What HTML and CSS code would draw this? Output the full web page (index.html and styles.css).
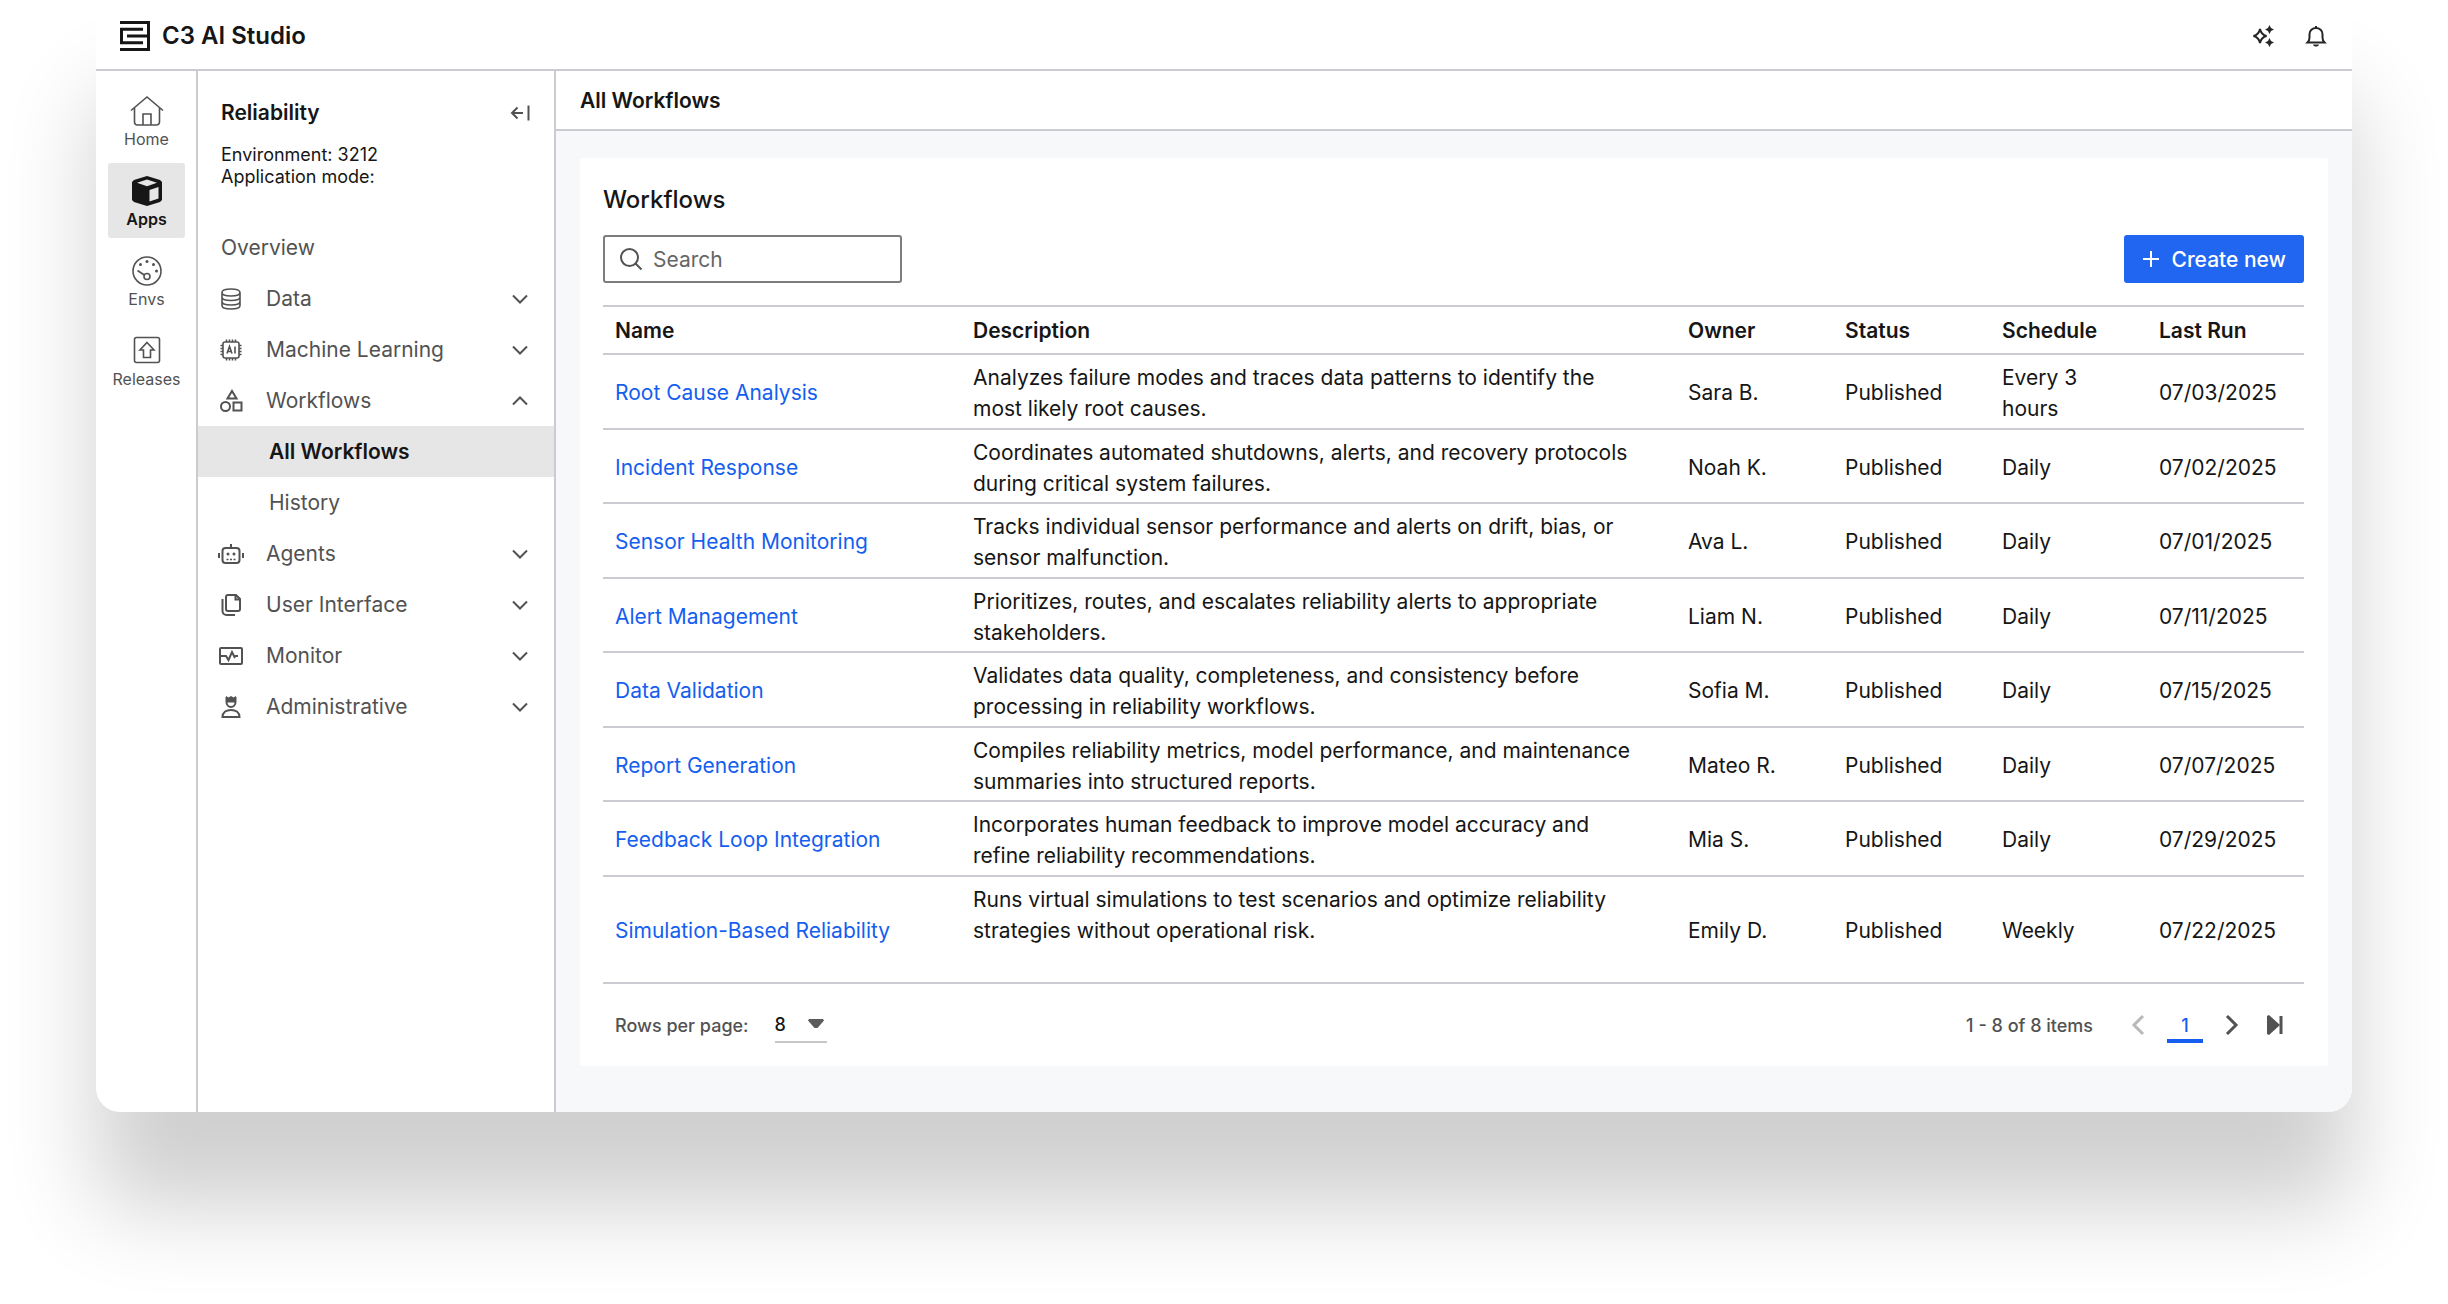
FILE: index.html
```html
<!DOCTYPE html>
<html lang="en">

<head>
	<meta charset="UTF-8" />
	<meta name="viewport" content="width=device-width, initial-scale=1.0" />
	<title>C3 AI Studio</title>
	<link rel="stylesheet" href="styles.css">
</head>

<body>
	<!-- shared icons -->
	<svg class="sprite" aria-hidden="true">
		<symbol id="chevron" viewBox="0 0 16 10">
			<path d="M1 1.5l7 7 7-7" />
		</symbol>
	</svg>

	<div class="window">
		<header class="header">
			<a href="#" class="brand">
				<svg class="logo" viewBox="0 0 30 30">
					<path d="M0 1.5h28.5v27H0M23 8.3H1.5v13.4H23M7 15h21.500" />
				</svg>
				C3 AI Studio
			</a>
			<div class="header-actions">
				<button class="icon-btn" aria-label="Assistant">
					<svg class="icon dark" width="22" height="22" viewBox="0 0 22 22">
						<path d="M8 4c.8 4 2.500 6 6.500 7-4 1-5.700 3-6.500 7-.8-4-2.500-6-6.500-7C5.500 10 7.200 8 8 4z" />
						<path class="fill" d="M17.500 0l1.500 3 3 1.500-3 1.500-1.500 3-1.500-3-3-1.500 3-1.500zM17.500 13l1.500 3 3 1.500-3 1.500-1.500 3-1.500-3-3-1.500 3-1.500z" />
					</svg>
				</button>
				<button class="icon-btn" aria-label="Notifications">
					<svg class="icon dark" width="20" height="22" viewBox="0 0 20 22">
						<path d="M1.500 17.500h17c-1.500-1.500-2-2.500-2-5V9a6.500 6 0 0 0-13 0v3.500c0 2.500-.5 3.500-2 5zM10 3V1" />
						<path class="solid" d="M7 19.500h6c-.5 2.800-5.500 2.800-6 0z" />
					</svg>
				</button>
			</div>
		</header>

		<div class="layout">
			<nav class="rail" aria-label="Primary">
				<a href="#" class="rail-item">
					<svg class="icon thin" width="34" height="30" viewBox="0 0 34 30">
						<path d="M1 14.500L17 1l16 13.500M4.500 12v14a3 3 0 0 0 3 3h19a3 3 0 0 0 3-3V12M13 29V18h8v11" />
					</svg>
					Home
				</a>
				<a href="#" class="rail-item active">
					<svg width="30" height="30" viewBox="0 0 30 30">
						<path fill="#161616" d="M15 0l13 4 2 2v18l-2 2-13 4-13-4-2-2V6l2-2z" />
						<path fill="#e6e6e6" d="M15 3.500l10 3.200-10 3.600L5 6.700zM17.500 14l9-3v11.500l-9 3z" />
					</svg>
					Apps
				</a>
				<a href="#" class="rail-item">
					<svg class="icon thin" width="30" height="30" viewBox="0 0 30 30">
						<circle cx="15" cy="15" r="14" />
						<circle cx="15" cy="20.500" r="3" />
						<path d="M5.500 14.500l6.800 4.500" />
						<g class="solid">
							<circle cx="15" cy="5.500" r="1.500" />
							<circle cx="8.500" cy="8.500" r="1.500" />
							<circle cx="21.500" cy="8.500" r="1.500" />
							<circle cx="24.500" cy="15" r="1.500" />
						</g>
					</svg>
					Envs
				</a>
				<a href="#" class="rail-item">
					<svg class="icon thin" width="28" height="28" viewBox="0 0 28 28">
						<rect x="1.500" y="1.500" width="25" height="25" rx="2" />
						<path d="M14 6.500l7 7.500h-3.500v7.500h-7V14H7z" />
					</svg>
					Releases
				</a>
			</nav>

			<aside class="sidebar">
				<div class="sidebar-head">
					<h2>Reliability</h2>
					<button class="icon-btn" aria-label="Collapse sidebar">
						<svg class="icon" width="20" height="18" viewBox="0 0 20 18">
							<path d="M18.500 1.500v15M13 9H2M7.500 3.500L2 9l5.500 5.500" />
						</svg>
					</button>
				</div>
				<p class="env">Environment: 3212<br>Application mode:</p>

				<nav class="menu" aria-label="Application">
					<a href="#" class="menu-item">Overview</a>
					<button class="menu-item">
						<svg class="icon thin" viewBox="0 0 26 24">
							<path d="M4 5.500v13C4 20.500 7 22 13 22s9-1.500 9-3.500v-13C22 3.500 19 2 13 2S4 3.500 4 5.500 7 9 13 9s9-1.500 9-3.500M4 10c0 2 3 3.500 9 3.500s9-1.500 9-3.500M4 14.500C4 16.500 7 18 13 18s9-1.500 9-3.500" />
						</svg>
						Data
						<svg class="chevron"><use href="#chevron" /></svg>
					</button>
					<button class="menu-item">
						<svg class="icon thin" viewBox="0 0 26 24">
							<rect x="5" y="4" width="16" height="16" rx="2" />
							<path d="M8.500 4V1.500M11.500 4V1.500M14.500 4V1.500M17.500 4V1.500M8.500 20v2.500M11.500 20v2.500M14.500 20v2.500M17.500 20v2.500M5 7.500H2.500M5 10.500H2.500M5 13.500H2.500M5 16.500H2.500M21 7.500h2.500M21 10.500h2.500M21 13.500h2.500M21 16.500h2.500" />
							<path d="M9 15.500l2.500-7 2.500 7M10 13.500h3M17 8.500v7" />
						</svg>
						Machine Learning
						<svg class="chevron"><use href="#chevron" /></svg>
					</button>
					<button class="menu-item" aria-expanded="true">
						<svg class="icon" viewBox="0 0 26 24">
							<path d="M14 2l4.500 7.500h-9z" />
							<circle cx="7.500" cy="17.500" r="4.500" />
							<rect x="15.500" y="13.500" width="8" height="8" />
						</svg>
						Workflows
						<svg class="chevron"><use href="#chevron" /></svg>
					</button>
					<a href="#" class="menu-item sub active">All Workflows</a>
					<a href="#" class="menu-item sub">History</a>
					<button class="menu-item">
						<svg class="icon" viewBox="0 0 26 24">
							<rect x="4.500" y="6" width="17" height="15" rx="3" />
							<path d="M13 6V2M1 11v5M25 11v5" />
							<path class="thin" d="M8.500 17.500h2M12 17.500h2M15.500 17.500h2" />
							<circle class="solid" cx="10" cy="12" r="1.500" />
							<circle class="solid" cx="16" cy="12" r="1.500" />
						</svg>
						Agents
						<svg class="chevron"><use href="#chevron" /></svg>
					</button>
					<button class="menu-item">
						<svg class="icon" viewBox="0 0 26 24">
							<path d="M10 2h8l4 4v10a2 2 0 0 1-2 2H10a2 2 0 0 1-2-2V4a2 2 0 0 1 2-2zM17.500 2v4.500H22M4.500 6v12a4 4 0 0 0 4 4H17" />
						</svg>
						User Interface
						<svg class="chevron"><use href="#chevron" /></svg>
					</button>
					<button class="menu-item">
						<svg class="icon" viewBox="0 0 26 24">
							<rect x="2" y="4" width="22" height="16" rx="1" />
							<path d="M2 12h6l2.500 4L14 8l2.500 5 1-1H20" />
						</svg>
						Monitor
						<svg class="chevron"><use href="#chevron" /></svg>
					</button>
					<button class="menu-item">
						<svg class="icon" viewBox="0 0 26 24">
							<path d="M8.500 2v5c0 3 2 5 4.500 5s4.500-2 4.500-5V2M8.500 6.500h9M4.500 22c0-4.500 3.500-7 8.500-7s8.500 2.500 8.500 7z" />
							<path class="solid" d="M8 1l2.500 1.500L13 1l2.500 1.500L18 1v5H8z" />
						</svg>
						Administrative
						<svg class="chevron"><use href="#chevron" /></svg>
					</button>
				</nav>
			</aside>

			<main class="main">
				<div class="page-bar">
					<h1>All Workflows</h1>
				</div>

				<section class="card">
					<h2>Workflows</h2>

					<div class="toolbar">
						<label class="search">
							<svg class="icon" width="24" height="24" viewBox="0 0 24 24">
								<circle cx="10.500" cy="10.500" r="8.500" />
								<path d="M16.500 16.500l6 6" />
							</svg>
							<input type="text" placeholder="Search" aria-label="Search">
						</label>
						<button class="create">
							<svg class="icon" width="18" height="18" viewBox="0 0 18 18">
								<path d="M9 1v16M1 9h16" />
							</svg>
							Create new
						</button>
					</div>

					<table>
						<thead>
							<tr>
								<th class="col-name">Name</th>
								<th>Description</th>
								<th class="col-small">Owner</th>
								<th class="col-small">Status</th>
								<th class="col-small">Schedule</th>
								<th class="col-small">Last Run</th>
							</tr>
						</thead>
						<tbody>
							<tr>
								<td><a href="#">Root Cause Analysis</a></td>
								<td class="desc">Analyzes failure modes and traces data patterns to identify the most likely root causes.</td>
								<td>Sara B.</td>
								<td>Published</td>
								<td>Every 3 hours</td>
								<td>07/03/2025</td>
							</tr>
							<tr>
								<td><a href="#">Incident Response</a></td>
								<td class="desc">Coordinates automated shutdowns, alerts, and recovery protocols during critical system failures.</td>
								<td>Noah K.</td>
								<td>Published</td>
								<td>Daily</td>
								<td>07/02/2025</td>
							</tr>
							<tr>
								<td><a href="#">Sensor Health Monitoring</a></td>
								<td class="desc">Tracks individual sensor performance and alerts on drift, bias, or sensor malfunction.</td>
								<td>Ava L.</td>
								<td>Published</td>
								<td>Daily</td>
								<td>07/01/2025</td>
							</tr>
							<tr>
								<td><a href="#">Alert Management</a></td>
								<td class="desc">Prioritizes, routes, and escalates reliability alerts to appropriate stakeholders.</td>
								<td>Liam N.</td>
								<td>Published</td>
								<td>Daily</td>
								<td>07/11/2025</td>
							</tr>
							<tr>
								<td><a href="#">Data Validation</a></td>
								<td class="desc">Validates data quality, completeness, and consistency before processing in reliability workflows.</td>
								<td>Sofia M.</td>
								<td>Published</td>
								<td>Daily</td>
								<td>07/15/2025</td>
							</tr>
							<tr>
								<td><a href="#">Report Generation</a></td>
								<td class="desc">Compiles reliability metrics, model performance, and maintenance summaries into structured reports.</td>
								<td>Mateo R.</td>
								<td>Published</td>
								<td>Daily</td>
								<td>07/07/2025</td>
							</tr>
							<tr>
								<td><a href="#">Feedback Loop Integration</a></td>
								<td class="desc">Incorporates human feedback to improve model accuracy and refine reliability recommendations.</td>
								<td>Mia S.</td>
								<td>Published</td>
								<td>Daily</td>
								<td>07/29/2025</td>
							</tr>
							<tr>
								<td><a href="#">Simulation-Based Reliability</a></td>
								<td class="desc">Runs virtual simulations to test scenarios and optimize reliability strategies without operational risk.</td>
								<td>Emily D.</td>
								<td>Published</td>
								<td>Weekly</td>
								<td>07/22/2025</td>
							</tr>
						</tbody>
					</table>

					<div class="pagination">
						<label for="rows">Rows per page:</label>
						<div class="select">
							<select id="rows">
								<option>8</option>
								<option>16</option>
							</select>
							<svg width="16" height="10" viewBox="0 0 16 10">
								<path fill="#5c5c5c" d="M1 0h14l1 1.500L9.500 9h-3L0 1.500z" />
							</svg>
						</div>
						<span class="count">1 - 8 of 8 items</span>
						<button class="pager" aria-label="Previous page" disabled>
							<svg class="icon bold" width="14" height="22" viewBox="0 0 14 22">
								<path d="M12 2l-9 9 9 9" />
							</svg>
						</button>
						<button class="pager current">1</button>
						<button class="pager" aria-label="Next page">
							<svg class="icon bold" width="14" height="22" viewBox="0 0 14 22">
								<path d="M2 2l9 9-9 9" />
							</svg>
						</button>
						<button class="pager" aria-label="Last page">
							<svg class="icon bold" width="16" height="20" viewBox="0 0 16 20">
								<path class="solid" d="M0 1l2-1 11 10L2 20l-2-1z" />
								<path d="M14 1v18" />
							</svg>
						</button>
					</div>
				</section>
			</main>
		</div>
	</div>
</body>

</html>
```
FILE: styles.css
```css
* {
	box-sizing: border-box;
}

body {
	margin: 0;
	padding: 0 96px 192px;
	background: #fff;
	color: #161616;
	font-family: Inter, "Liberation Sans", sans-serif;
	font-size: 21px;
	line-height: 31px;
}

h1,
h2,
p {
	margin: 0;
}

h1,
h2 {
	font-size: 21px;
	font-weight: 600;
}

a {
	color: #155eef;
	text-decoration: none;
}

button,
input,
select {
	font: inherit;
	color: inherit;
	border: none;
	background: none;
	padding: 0;
	margin: 0;
}

button {
	cursor: pointer;
}

.sprite {
	display: none;
}

/* icons */
.icon {
	flex: none;
	fill: none;
	stroke: #525252;
	stroke-width: 2;
	overflow: visible;
}

.icon.dark {
	stroke: #262626;
}

.icon.thin,
.icon .thin {
	stroke-width: 1.6;
}

.icon.bold {
	stroke-width: 3;
}

.icon .solid {
	fill: #525252;
	stroke: none;
}

.icon.dark .fill,
.icon.dark .solid {
	fill: #262626;
	stroke: none;
}

.icon-btn {
	display: flex;
}

/* window */
.window {
	background: #fff;
	border-radius: 24px;
	box-shadow: 0 95px 90px rgba(0, 0, 0, 0.19);
}

.header {
	display: flex;
	justify-content: space-between;
	align-items: center;
	height: 71px;
	padding: 2px 26px 0 24px;
	border-bottom: 2px solid #cbcbd1;
}

.brand {
	display: flex;
	align-items: center;
	gap: 12px;
	color: #161616;
	font-size: 24px;
	font-weight: 600;
}

.logo {
	width: 30px;
	height: 30px;
	fill: none;
	stroke: #161616;
	stroke-width: 3;
}

.header-actions {
	display: flex;
	gap: 32px;
}

.layout {
	display: flex;
}

/* left rail */
.rail {
	flex: none;
	width: 102px;
	padding: 12px 11px 12px 12px;
	border-right: 2px solid #cbcbd1;
}

.rail-item {
	display: flex;
	flex-direction: column;
	align-items: center;
	justify-content: space-between;
	height: 75px;
	margin-bottom: 5px;
	padding: 13px 0 8px;
	border-radius: 3px;
	color: #525252;
	font-size: 16px;
	line-height: 22px;
}

.rail-item.active {
	background: #e6e6e6;
	color: #161616;
	font-weight: 600;
}

/* sidebar */
.sidebar {
	flex: none;
	width: 358px;
	padding-top: 26px;
	border-right: 2px solid #cbcbd1;
}

.sidebar-head {
	display: flex;
	justify-content: space-between;
	align-items: center;
	padding: 0 24px 0 23px;
}

.env {
	padding: 16px 23px 34px;
	font-size: 18px;
	line-height: 22px;
}

.menu-item {
	display: flex;
	align-items: center;
	width: 100%;
	height: 51px;
	padding: 0 26px 0 23px;
	color: #525252;
	text-align: left;
}

.menu-item .icon {
	width: 26px;
	height: 24px;
	margin: 0 22px 0 -3px;
}

.menu-item .chevron {
	width: 16px;
	height: 10px;
	margin-left: auto;
	fill: none;
	stroke: #525252;
	stroke-width: 2;
}

.menu-item[aria-expanded="true"] .chevron {
	transform: rotate(180deg);
}

.menu-item.sub {
	padding-left: 71px;
}

.menu-item.active {
	background: #e6e6e6;
	color: #161616;
	font-weight: 600;
}

/* main */
.main {
	flex: 1;
	min-width: 0;
	padding-bottom: 46px;
	background: #f7f8fa;
	border-bottom-right-radius: 24px;
}

.page-bar {
	display: flex;
	align-items: center;
	height: 60px;
	padding: 0 24px;
	background: #fff;
	border-bottom: 2px solid #cbcbd1;
}

.card {
	margin: 27px 24px 0;
	padding: 26px 24px 0 23px;
	background: #fff;
	border-radius: 3px;
}

.card h2 {
	font-size: 24px;
	font-weight: 500;
}

.toolbar {
	display: flex;
	justify-content: space-between;
	margin: 20px 0 22px;
}

.search {
	display: flex;
	align-items: center;
	gap: 10px;
	width: 299px;
	height: 48px;
	padding: 0 14px;
	border: 2px solid #7d7d7d;
	border-radius: 3px;
}

.search input {
	width: 100%;
	min-width: 0;
	outline: none;
}

.search input::placeholder {
	color: #666;
	opacity: 1;
}

.create {
	display: flex;
	align-items: center;
	gap: 12px;
	height: 48px;
	padding: 0 18px;
	border-radius: 3px;
	background: #2166f0;
	color: #fff;
	font-weight: 500;
}

.create .icon {
	stroke: #fff;
}

/* table */
table {
	width: 100%;
	table-layout: fixed;
	border-collapse: collapse;
	border-top: 2px solid #cbcbd1;
}

tr {
	border-bottom: 2px solid #cbcbd1;
}

th,
td {
	padding: 0 24px 0 12px;
	text-align: left;
}

th {
	height: 48px;
	font-weight: 600;
}

td {
	padding-top: 2px;
}

.col-name {
	width: 358px;
}

.col-small {
	width: 157px;
}

tbody tr {
	height: 75px;
}

tbody tr:nth-child(even) {
	height: 74px;
}

tbody tr:last-child {
	height: 107px;
}

.desc {
	padding: 7px 34px 0 12px;
	vertical-align: top;
}

/* pagination */
.pagination {
	display: flex;
	align-items: center;
	height: 82px;
	padding: 0 21px 0 12px;
	color: #525252;
	font-size: 18px;
	font-weight: 500;
}

.select {
	display: grid;
	align-items: center;
	width: 52px;
	height: 36px;
	margin-left: 26px;
	border-bottom: 2px solid #c6c6c6;
}

.select select,
.select svg {
	grid-area: 1 / 1;
}

.select select {
	appearance: none;
	width: 100%;
	color: #161616;
}

.select svg {
	justify-self: end;
	margin-right: 3px;
	pointer-events: none;
}

.count {
	margin-left: auto;
	margin-right: 38px;
}

.pager {
	display: flex;
	justify-content: center;
	align-items: center;
	height: 36px;
}

.pager:disabled {
	opacity: 0.4;
}

.pager + .pager {
	margin-left: 22px;
}

.pager:last-child {
	margin-left: 28px;
}

.pager.current {
	width: 36px;
	border-top: 4px solid transparent;
	border-bottom: 4px solid #155eef;
	color: #155eef;
}
```
